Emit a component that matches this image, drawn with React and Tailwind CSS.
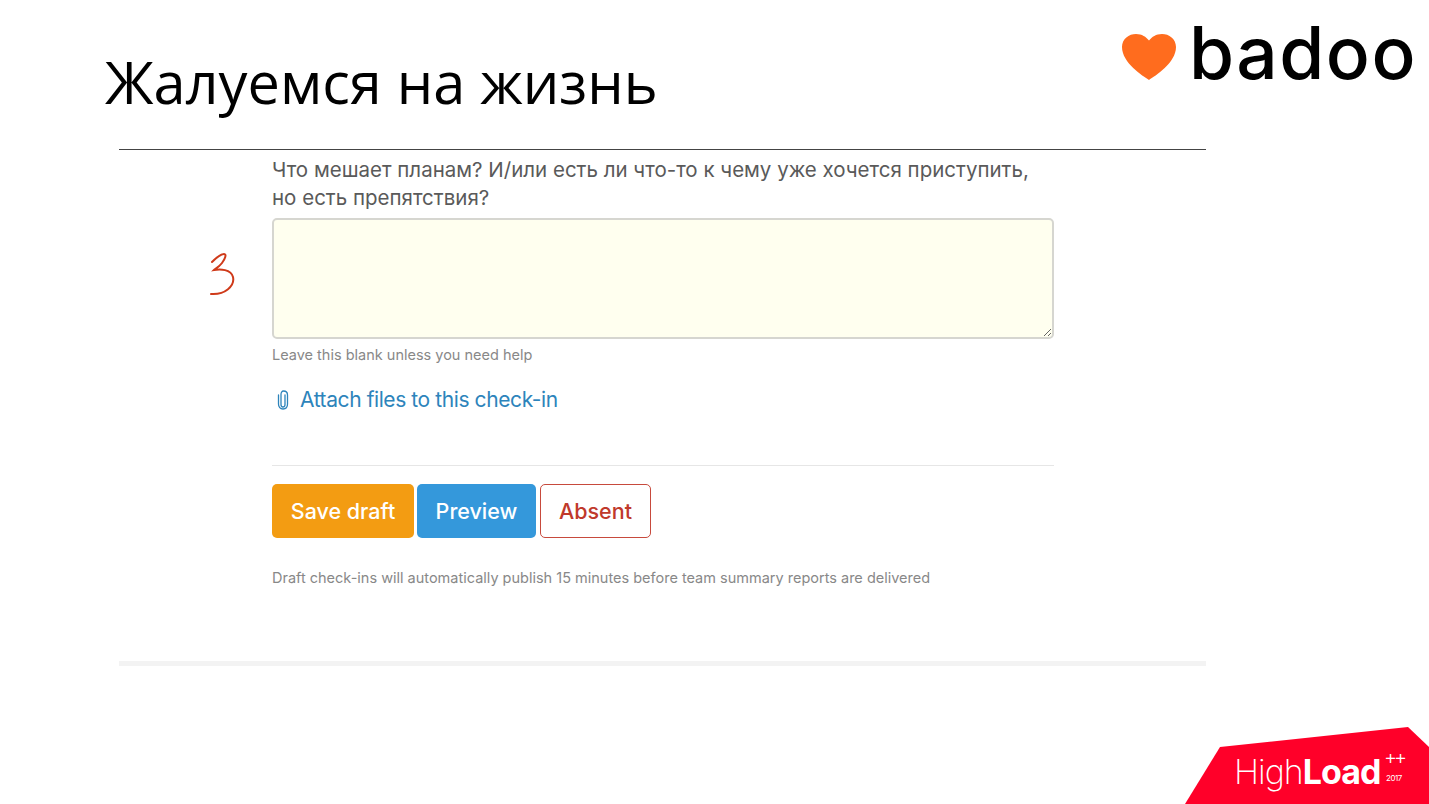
export default function App() {
    return (
        <div className="relative flex flex-col w-[1429px] h-[804px] overflow-hidden bg-white font-['Inter',sans-serif]">
            {/* Slide header */}
            <header className="flex justify-between items-start h-[149px] pl-[105px] pr-[12px]">
                <h1 className="mt-[44px] text-[57.7px] leading-[76px] text-black font-['Open_Sans',sans-serif]">Жалуемся на жизнь</h1>
                <div className="flex items-center mt-[15px]">
                    <svg width="56" height="47" viewBox="0 0 56 50" preserveAspectRatio="none" className="mr-[12px] mt-[7px]">
                        <path d="M28 50C22 46 1 32 1 15C1 6 8 1 15 1C21 1 25 4 28 8C31 4 35 1 41 1C48 1 55 6 55 15C55 32 34 46 28 50Z" fill="#ff6c1e" />
                    </svg>
                    <span className="text-[73px] leading-[76px] font-medium tracking-[1.5px] text-black">badoo</span>
                </div>
            </header>

            {/* Check-in form */}
            <main className="ml-[119px] w-[1087px] h-[517px] border-t border-b-[5px] border-t-[#444] border-b-[#f3f3f3] pl-[153px]">
                <div className="w-[782px] pt-[6px]">
                    <p className="text-[20.5px] leading-[28px] text-[#5a5a5a]">
                        Что мешает планам? И/или есть ли что-то к чему уже хочется приступить,
                        <br />
                        но есть препятствия?
                    </p>
                    <div className="relative mt-[6px]">
                        <svg width="28" height="48" viewBox="0 0 28 48" fill="none" className="absolute left-[-62px] top-[34px]">
                            <path d="M2 10C6 6 11 2 14 2C17 2 15 7 12 11C9 15 5 17 4 18C10 17 21 17 23 25C25 34 15 43 1 42" stroke="#cf3a1a" strokeWidth="2" strokeLinecap="round" />
                        </svg>
                        <textarea className="block w-full h-[121px] rounded-[5px] border-2 border-[#d6d6d0] bg-[#ffffef]" />
                    </div>
                    <p className="mt-[6px] text-[14.5px] leading-[20px] text-[#888]">Leave this blank unless you need help</p>
                    <div className="flex items-center mt-[21px] h-[28px] text-[#2d84bb]">
                        <svg width="12" height="20" viewBox="0 0 12 20" fill="none" className="ml-[5px] mr-[11px]">
                            <path d="M8 5V14.5C8 16 7.2 17 6 17C4.8 17 4 16 4 14.5V4.5C4 2.5 4.9 1 6.5 1C8.6 1 10.5 2.5 10.5 5V14C10.5 17 8.8 19 6 19C3.2 19 1.5 17 1.5 14V5" stroke="currentColor" strokeWidth="1.3" strokeLinecap="round" />
                        </svg>
                        <span className="text-[21px] leading-[28px] tracking-[-0.41px]">Attach files to this check-in</span>
                    </div>
                    <hr className="mt-[51px] border-[#e6e6e6]" />
                    <div className="flex mt-[18px]">
                        <button className="w-[142px] h-[54px] rounded-[5px] bg-[#f39c12] text-white text-[21.5px] font-medium">Save draft</button>
                        <button className="w-[119px] h-[54px] ml-[3px] rounded-[5px] bg-[#3498db] text-white text-[21.5px] font-medium">Preview</button>
                        <button className="w-[111px] h-[54px] ml-[4px] rounded-[5px] border border-[#c74a3d] bg-white text-[#c0392b] text-[21.5px] font-medium">Absent</button>
                    </div>
                    <p className="mt-[30px] text-[14.5px] leading-[20px] text-[#888]">Draft check-ins will automatically publish 15 minutes before team summary reports are delivered</p>
                </div>
            </main>

            {/* HighLoad logo */}
            <div className="flex justify-end mt-auto">
                <div className="relative w-[244px] h-[77px]">
                    <svg width="244" height="77" viewBox="0 0 244 77">
                        <polygon points="35,20 223,0 244,20 244,77 0,77" fill="#ff0029" />
                    </svg>
                    <div className="absolute left-[49px] top-[26px] flex items-baseline text-white text-[34px] leading-[38px] tracking-[-1px]">
                        <span className="font-extralight">High</span>
                        <span className="font-bold">Load</span>
                    </div>
                    <span className="absolute left-[199px] top-[20px] text-white text-[20px] leading-[20px] font-light tracking-[-3px]">++</span>
                    <span className="absolute left-[201px] top-[46px] text-white text-[8px] leading-[10px] tracking-[-0.5px]">2017</span>
                </div>
            </div>
        </div>
    );
}
